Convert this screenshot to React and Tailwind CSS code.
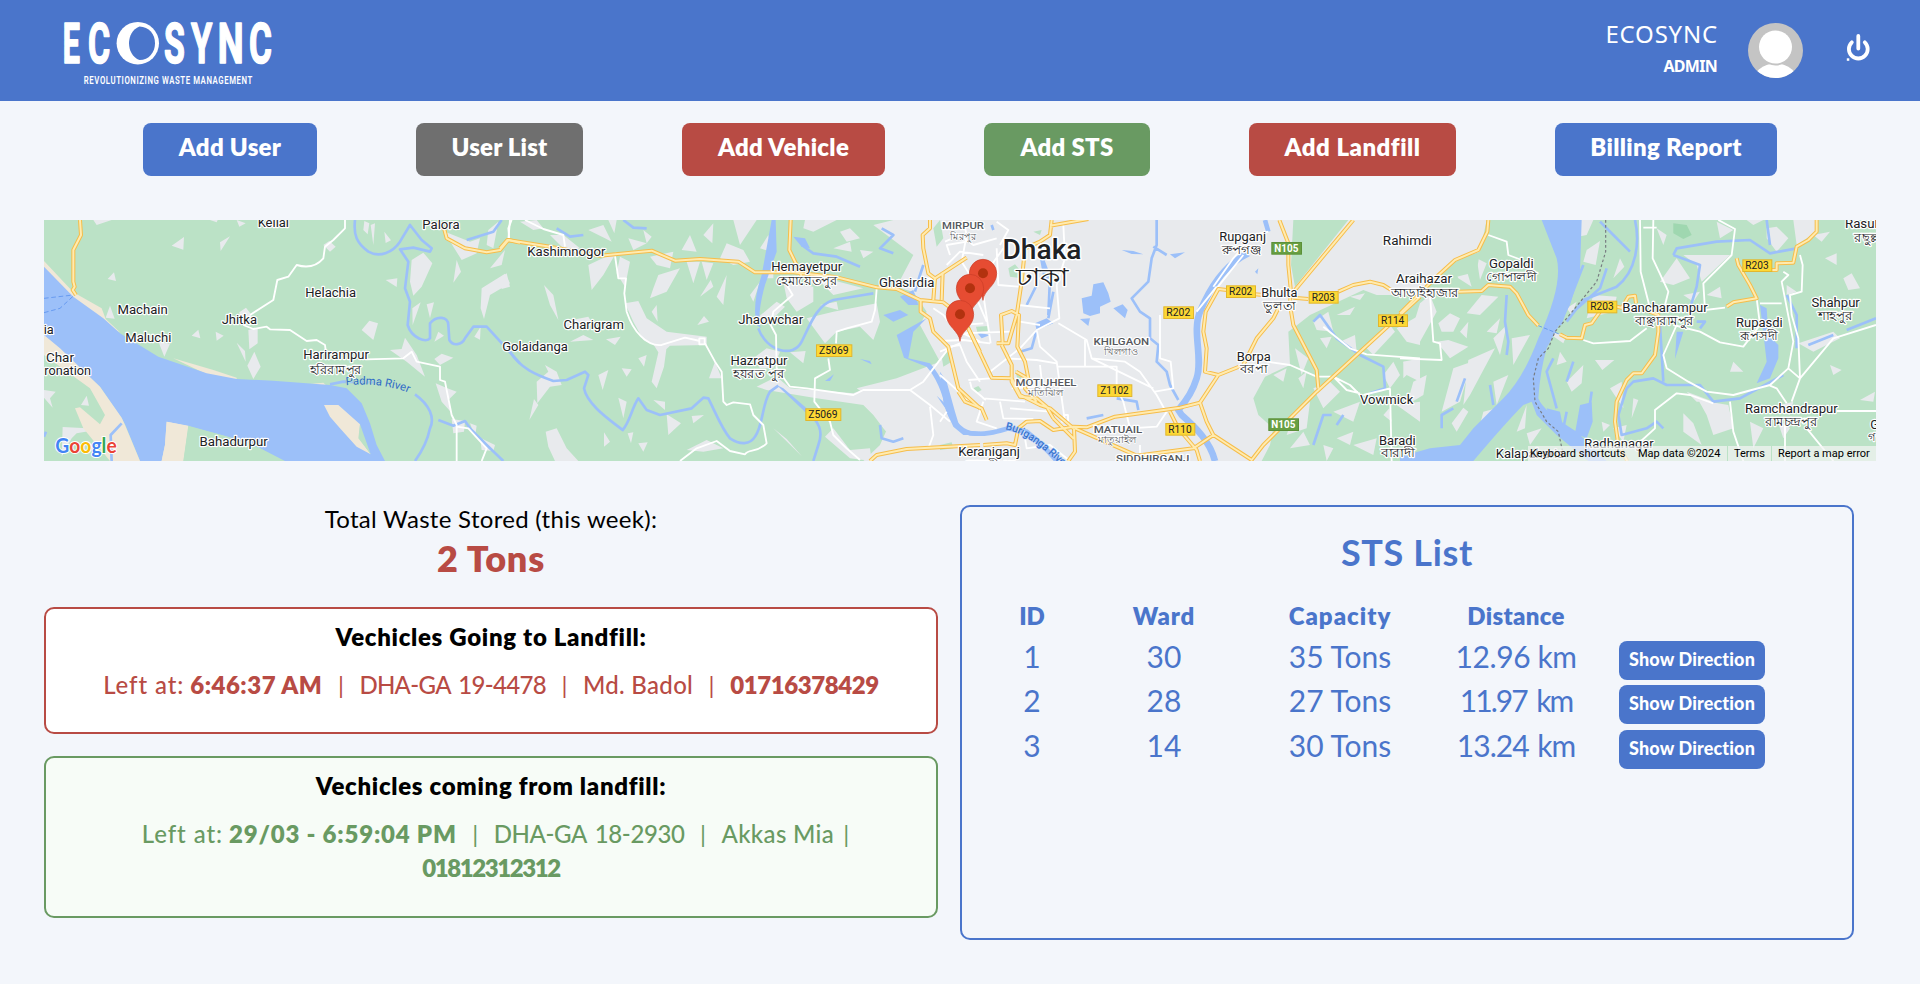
const actions = [
  { label: "Add User", box: "w-[174px] bg-[#4a75cb] tracking-[0.3px]" },
  { label: "User List", box: "w-[167px] bg-[#6f6f6f] tracking-[0.2px]" },
  { label: "Add Vehicle", box: "w-[203px] bg-[#b84b44] tracking-[0.3px]" },
  { label: "Add STS", box: "w-[166px] bg-[#699a62] tracking-[0.3px]" },
  { label: "Add Landfill", box: "w-[207px] bg-[#b84b44] tracking-[0.5px]" },
  { label: "Billing Report", box: "w-[222px] bg-[#4a75cb] tracking-[0.3px]" },
];

const stations = [
  { id: "1", ward: "30", capacity: "35 Tons", distance: "12.96 km", track: "tracking-[-0.4px]" },
  { id: "2", ward: "28", capacity: "27 Tons", distance: "11.97 km", track: "tracking-[-2px] [word-spacing:4px]" },
  { id: "3", ward: "14", capacity: "30 Tons", distance: "13.24 km", track: "tracking-[-1px] [word-spacing:2px]" },
];

const roboto = 'Roboto, "Noto Sans", sans-serif';

/* Geometry is kept per map tile; every tile is drawn at three units per pixel. */
const tiles = {
  a: "translate(-4 -5) scale(0.33333)",
  b: "translate(456 -5) scale(0.33333)",
  c: "translate(896 -5) scale(0.33333)",
  d: "translate(1356 -5) scale(0.33333)",
};

const urban = {
  a: "M395,92L432,66 430,104zM540,82L570,64 542,108zM510,15L533,15 530,22zM590,15L617,25 598,35zM203,192L222,172 228,198zM197,308L210,272 224,311zM455,362L475,344 481,370zM527,350L551,362 530,377zM356,382L390,386 373,425zM625,345L653,338 653,385 628,403zM590,383L615,408 617,440zM622,452L643,410 662,455 640,492zM598,292L618,278 635,300 615,330 600,320zM965,345L988,317 1014,325 1000,375zM1037,195L1072,190 1070,216zM850,90L868,78 887,95 870,110zM973,18L988,25 983,58 970,45zM992,30L1005,25 1000,90zM1033,50L1053,76 1037,84zM1115,135L1150,113 1177,145 1145,215 1120,242 1110,200zM1117,280L1142,262 1118,330zM1160,268L1182,262 1170,310zM1050,405L1085,402 1095,368 1130,420 1155,485 1100,440zM1183,432L1205,416 1240,428 1200,450zM1183,380L1195,350 1212,362zM1303,365L1322,335 1320,374zM1325,220L1395,176 1410,205 1350,240 1332,312 1322,280zM1250,135L1263,170 1240,203zM1215,50L1290,80 1320,70 1310,115 1265,135 1240,95zM1345,45L1375,20 1360,100 1340,90zM1350,160L1395,105 1385,150zM1187,505L1222,520 1250,530 1225,555 1232,590 1205,560zM1235,612L1275,618 1272,650 1240,655zM1320,668L1365,690 1360,708 1325,705zM123,570L140,542 147,572zM12,525L47,530 30,550 38,578 12,548zM68,636L185,642 110,655 95,670 65,725zM500,738L535,722 565,738zM160,15L215,15 170,30zM1290,625L1310,632 1305,665z",
  b: "M60,20L110,15 130,40 100,45zM0,190L20,175 30,215 5,222zM132,210L160,240 175,315 150,270zM150,60L190,60 240,100 200,110zM265,45L310,30 335,80 315,70zM325,15L350,15 343,55zM385,70L440,85 400,105zM430,45L455,65 440,85zM360,125L390,140 375,215 350,175zM265,150L350,110 310,180 275,225zM450,125L520,110 510,160 470,150zM545,105L570,60 590,110zM560,140L600,140 580,205zM605,140L640,145 620,195zM610,60L640,25 637,85zM660,130L680,85 730,105 750,140 700,150zM700,15L770,15 720,90zM780,100L805,60 815,110zM460,220L475,180 540,160 500,230 450,250zM600,245L632,195 640,215zM650,245L680,180 670,270zM455,290L470,270 473,320zM375,265L415,258 440,310 500,350 620,365 620,390 510,392 480,420 460,388 430,375 400,320zM190,320L265,305 280,330 200,345zM210,380L250,360 280,375zM318,373L362,365 345,390zM592,330L612,303 627,320zM478,400L500,395 492,455 470,520 455,500zM415,430L440,420 432,455zM295,480L325,465 308,525zM365,460L395,463 380,485zM110,500L145,470 135,450 170,470 185,510 150,515 112,565zM88,615L102,552 115,570zM137,650L170,640 200,700 235,738 165,738 145,695zM312,652L330,680 312,695zM383,655L400,652 393,685zM355,548L380,560 370,610zM460,555L495,560 495,585zM500,598L543,625 505,660zM575,603L612,600 580,625zM415,685L443,682 430,710zM560,705L620,675 670,700 610,710zM627,490L645,440 665,490zM760,430L800,400 840,410 820,460 780,460zM870,412L917,408 910,445zM770,515L830,485 870,520 1060,535 1100,520 1180,510 1290,570 1290,700 1200,700 1150,640 1120,600 1090,570 950,550 800,525zM820,640L860,672 907,725zM975,665L1000,640 1050,705 1110,700 1115,738 1050,730zM915,15L1010,15 940,50 910,40zM1000,100L1050,80 1055,110zM1020,50L1050,40 1080,70 1040,80zM1120,30L1180,15 1290,15 1290,170 1250,235 1190,215 1240,120zM1080,105L1120,110 1090,130zM850,200L940,215 940,260 890,290 860,250zM940,180L1090,220 1000,240zM770,310L830,260 855,275 830,300 790,320zM960,270L1010,260 1015,285zM920,310L1000,290 1130,265 1140,320 1120,375 1080,335 1010,350 975,385zM800,130L820,110 820,190 790,190zM750,240L780,200 760,260z",
  d: "M155,65L205,70 190,95zM160,160L195,150 215,215 175,190zM230,130L260,145 240,195zM245,240L295,245 240,300 200,295zM60,265L90,240 110,290 60,380 40,330zM115,325L150,295 180,310 160,350 125,350zM110,380L145,375 205,395 150,430zM180,350L205,320 200,370zM260,350L300,310 290,355zM205,435L285,400 210,540 190,570zM335,370L390,360 340,450zM280,370L320,330 300,420zM280,500L325,480 290,570zM160,460L215,440 180,560 125,590zM155,625L190,578 205,590 170,650zM250,590L290,580 240,630zM40,500L80,480 70,540 20,570zM10,440L60,440 10,490zM380,570L375,640 350,650zM380,655L425,640 390,690zM560,105L600,78 587,150 550,140zM500,15L580,15 560,60 510,70zM640,190L660,130 673,155zM585,435L643,435 607,465zM500,500L550,450 545,505 515,530zM480,410L500,440 470,450zM500,280L530,260 515,300zM630,520L665,500 670,580 650,550zM605,620L630,630 610,650zM700,550L715,555 695,610zM850,595L880,625 905,690 850,650zM920,240L960,215 965,250zM1275,130L1310,115 1310,150zM1330,190L1355,175 1380,220 1345,225zM1290,450L1325,465 1300,480zM1380,555L1425,530 1420,560zM1100,40L1130,35 1165,70 1130,110 1100,70zM1180,15L1250,15 1250,50 1190,90zM1240,60L1290,50 1265,80zM1040,15L1090,15 1060,30zM850,120L990,120 905,200 890,150zM950,20L1000,45 960,70zM780,200L830,130 870,190 820,210zM850,240L900,230 880,260zM895,555L985,570 1000,640 940,660 920,600zM1050,620L1090,640 1060,700zM1130,610L1170,640 1150,670zM860,530L940,560 890,560zM1195,385L1300,350 1320,370 1240,410zM1000,440L1030,470 990,470zM580,240L650,245 640,290 560,310zM440,350L500,360 490,385zM1100,580L1180,560 1170,600zM770,40L800,60 790,90zM640,640L680,630 670,680zM1160,210L1190,230 1160,240z",
};

const greens = {
  c: "M1060,15L1225,15 1065,215 1053,150zM205,160L225,148 240,165 235,188 210,185zM108,335L146,333 146,348 112,350zM5,425L25,398 35,440 10,455zM100,520L115,513 125,525 110,533zM225,465L250,480 235,500zM280,50L305,45 300,60zM0,690L35,682 40,700 0,705zM120,700L150,705 120,715zM-20,40L0,15 10,70 -10,95z",
  gaps: "M1120,320L1165,290 1180,350 1130,345zM1140,370L1175,365 1160,400zM1190,300L1245,275 1230,300zM1065,400L1105,430 1085,480zM1200,380L1245,360 1250,410zM1280,400L1350,330 1365,350 1300,420zM1330,480L1360,440 1380,480 1350,520zM1120,520L1170,500 1200,530 1150,580zM1180,590L1260,560 1240,620zM1060,600L1110,560 1100,640 1040,660zM1000,480L1040,460 1030,500zM1075,490L1100,470 1090,520zM1330,600L1348,580 1355,620zM1190,670L1240,650 1230,690zM1050,700L1090,650 1110,690zM1370,340L1440,300 1440,390 1400,380zM1390,440L1440,430 1440,500 1400,480zM1150,690L1180,700 1160,738zM1240,690L1310,670 1300,720zM1370,570L1440,560 1440,620zM1230,245L1275,235 1260,255z",
  d: "M265,15L425,15 440,110 360,150 330,100 240,110zM160,150L240,110 230,170 110,200zM820,25L860,30 875,60 850,70 820,55z",
};

const highways = {
  a: "M120,15L123,60 100,105 100,200 104,215 98,225 108,240M1190,25L1212,40 1220,70 1275,100 1340,112 1380,105 1405,75 1440,83",
  b: "M0,100L22,75 150,95 300,122 455,107 525,137 600,132 715,140 765,172 880,172 1010,187 1130,217 1190,222 1260,255 1330,262 1380,300 1405,340 1440,410M872,15L868,105 890,150 905,185M1290,15L1290,40 1268,60 1270,100 1285,175 1305,190 1300,255M1305,190L1400,128M1328,172L1325,255M1262,255L1262,290 1290,310 1300,350 1345,395 1375,520 1440,580M1110,738L1130,720 1220,702 1440,690",
  c: "M335,15L330,60 300,80 255,100 245,200 230,300 205,385 170,385M205,385L188,385 183,300 215,288 237,300 232,395 255,440 265,490M330,32L445,12M85,340L155,488 215,490 240,540 300,570 330,580 400,640M185,390L215,450 215,500 240,545 290,550 320,575 340,610M228,470L262,490 255,520 290,560M55,530L75,560 125,580 140,615M130,690L200,685 225,690 235,640 260,620 300,618 340,645 400,635 440,637 525,605 720,578 780,563 835,480 910,450 950,370 1000,310 1020,270M340,610L400,670M402,640L405,710 385,738M405,640L590,722 760,700 820,660 935,735 970,690 1130,530 1440,245M1240,15L1065,225M1018,15L1045,85 1045,150 1052,220 1050,270 1060,330 1130,465 1135,520M835,480L795,470 800,400 790,350 797,290 835,222 860,225M945,238L970,240M1060,248L1105,252M1195,230L1240,210 1290,200 1330,210 1370,235M690,590L715,640 770,705 780,738M780,563L800,620 820,660",
  d: "M265,15L262,50 235,105 165,135 110,185 0,295M175,230L245,228 265,210 330,215 350,235 385,300 415,332M480,358L500,368 545,370 555,330 575,325 600,290M650,275L665,278 685,245 705,242 708,265M735,285L775,300 775,350 765,420 725,475 700,475 680,495 650,560 645,620 655,690 682,738M980,275L1000,262 1070,250 1050,210 1015,150 1010,130M1115,165L1130,165 1130,145 1180,143 1190,95 1225,75 1250,50 1250,15",
};

const streets = {
  a: "M915,15L915,40 880,75 855,95 850,130Q820,165 770,150L745,185 712,195 700,255 630,300M610,330L640,342 680,335 690,343 750,345 800,378 830,375 855,390 860,430M980,433L1090,430 1115,410 1130,440 1200,455 1200,495 1215,500 1235,600 1250,630 1250,738M1250,635L1285,640 1340,700 1325,738M1415,15L1405,40 1408,75",
  b: "M75,15L130,42 190,60 195,95M30,15L25,75M345,122L355,190 378,190 373,235 380,290C400,350 440,395 485,390L555,368 600,378M598,370h16v18h-16zM615,385L645,440 665,470 670,560 680,570 700,562 750,568 760,600 790,630 800,685C770,715 745,700 735,718L690,708 650,678 590,700 540,738M860,210L878,240 820,290 812,330 828,360 830,460 870,515 920,520 1060,540 1090,525 1230,525 1270,500 1350,395M1130,222L1125,285 1115,320 1040,340 1010,350 1008,385M985,430L990,465 945,490 943,560 990,620 1000,660 1040,700 1080,735M1230,525L1290,570 1350,620M1290,575L1300,660 1285,700M1350,395L1380,390 1400,440 1440,500M1300,280L1330,300 1360,340 1440,380M1350,120L1340,90 1400,80M1260,190L1300,190",
  c: "M0,378L70,375 150,385M65,355L210,350M70,15L80,60 65,140 90,180M130,240L152,385M110,250L140,320M60,330L130,325M20,150L60,110 130,120M15,80L60,60 100,90 170,70M170,20L205,45 180,90M170,100L175,210 235,215M140,170L190,100M350,210L358,310 290,345 240,400 150,470M370,30L375,130 350,210M355,325L440,375 455,430 640,520M290,345L300,395 350,440 372,600 375,620M435,375L435,455M350,455L435,455 530,455 530,520 550,560 570,640 650,635 680,590M455,430L555,440 600,470 650,540 675,585M235,270L330,280M240,320L300,330M90,500L95,520Q150,565 130,550L255,560M85,495L150,490M180,560L190,610 280,612M200,430L290,435 350,445M215,520L290,515M210,580L330,590M300,450L310,540M130,560L110,620 170,640M250,640L260,700 330,690 390,738M660,300L660,430 692,440 700,520 645,530M830,215L770,290M985,50L940,60 880,130 820,215M830,220L910,120M980,440L1050,450 1130,485 1180,485 1230,510 1260,540M1150,335L1230,400 1280,418 1440,430M1180,485L1220,525 1260,535M1350,520L1355,738M1270,540L1350,520M370,600h14v20h-20M600,690L600,730M0,410L60,385M0,480L90,560M20,590L0,620",
  d: "M720,15L722,170 750,280M760,15L758,130 805,230 795,270M730,38L770,38M550,375L580,385 690,378 740,340M955,15L1005,42 995,120 910,205 915,285 975,278M830,330L790,420 800,460 865,500 920,530 1000,540 1110,510 1165,460 1180,380 1145,200 1165,180 1150,170M820,330L900,350 960,382 1030,395 1080,330 1070,250M1145,265L1080,265M1200,120L1208,150 1205,230 1170,240 1175,300 1195,370 1200,490 1175,560M1110,512L1130,520 1160,565M1165,460L1200,490 1300,370 1428,330M940,565L870,540 830,535 765,585 765,640 710,690M990,560L1000,650 1030,738M1310,588L1428,588M1155,630L1155,738M1220,640L1300,738M265,60L320,80 325,120 365,135M90,240L100,380 120,385 125,435 0,430",
};

const waterAreas = {
  a: "M12,155L100,245 190,310 240,355 355,425 500,475 590,492 700,497 870,510 920,520 965,565 990,625 1010,690 1035,738 730,738 660,700 580,670 440,632 380,620 375,690 365,738 300,738 255,628 245,610 180,515 130,470 12,370z",
  b: "M815,15L827,15 830,110 795,210Q770,300 782,340L770,330Q755,270 785,180zM1190,360L1280,310 1240,350 1225,430 1290,445Q1340,500 1362,610L1385,645 1440,650 1440,660 1390,660 1360,635 1340,590Q1320,500 1280,455L1212,428zM1150,300L1200,285 1225,300 1180,320zM1200,245L1240,225 1255,270 1225,270zM830,510L850,520 920,580 915,590zM1080,432L1110,438 1115,448zM975,498L1002,478 990,498zM1310,542L1340,570 1350,600zM880,65L915,70 930,100 905,95z",
  c: "M425,250L455,242 460,208 490,202 505,235 512,260 480,275 480,295 450,303 430,295zM520,280L548,268 563,285 555,310zM420,312L450,310 445,333zM285,325L320,310 340,325 290,345zM298,120L320,160 328,200 312,200zM545,105L580,108 610,118 575,117zM690,118L735,112 705,130zM945,170L955,160 952,178zM110,352L150,360 125,370zM0,470L20,500 45,590 60,640 40,625 10,560z",
  d: "M425,15L545,15 540,170 510,270 440,400Q420,470 415,550 430,590 530,650L620,738 565,738 470,660 410,600 395,560 370,570Q320,620 220,738L0,738 0,725 90,700 180,690 220,640 310,550Q370,490 415,370 490,210 470,130zM1080,270L1100,280 1105,360 1135,390 1135,430 1110,490 1070,505 1100,440zM540,570L575,562 578,620 560,670 525,655zM830,350L850,350 825,432zM440,580L480,590 490,640 450,610z",
};

const streams = {
  a: "M945,15C940,60 950,85 985,110C1020,130 1060,110 1080,80L1110,30 1145,75 1175,100 1170,110 1120,98 1080,103 1105,140 1095,220 1110,260 1103,330C1115,370 1160,385 1170,370L1170,325C1190,300 1225,305 1225,330L1228,375C1240,395 1265,390 1275,370L1300,335 1340,335 1440,445M870,508L910,500 1020,502M1125,538C1170,570 1185,610 1170,640Q1160,690 1125,738M1195,615L1240,632 1275,618 1290,640 1340,690 1390,738M245,625L212,660 215,738M1385,15L1360,50 1280,75M12,665L18,650",
  b: "M30,410C60,460 110,480 160,498L200,495 255,470 265,480 252,520C262,570 330,615 368,645C390,620 395,580 415,550L440,585 480,600 575,580 610,548 625,550C650,600 665,640 690,670C720,690 750,690 765,665C790,630 785,570 810,530L835,512M915,585C960,620 970,650 955,690L940,738M775,340C800,410 880,430 905,380C930,330 950,270 1000,255L1090,240 1120,235M170,40L210,65 250,60M370,15L400,38 440,40M905,90L940,115 1010,125 1080,155M1140,630L1145,670 1180,680 1210,670M1245,230L1260,180 1270,150M1145,40L1180,60 1140,100 1180,115",
  c: "M650,15L650,90 635,130 625,200 575,250 600,290 630,310 630,370 655,390 650,440 680,470 690,510 715,555M640,95L680,120M530,550L590,560 595,585M300,110L330,190 325,300M340,230L325,310M290,210L260,270M290,345L275,400 240,410M440,610L490,600M155,30L160,45M1120,320L1140,300 1190,370 1260,420 1330,455 1335,520 1290,535M1120,690L1150,600 1175,600M1190,630L1210,600",
  d: "M705,15C720,80 710,170 650,215L550,255 500,320M550,150L480,330M620,160L600,220 520,290M600,20L640,60 690,110M820,120L830,100 950,80 1050,75 1110,115 1190,100M820,120L900,150 890,215 870,280M780,330L790,500M680,520L700,500 760,490 800,510 900,510 940,560 1020,550 1150,480M680,520L655,600 665,660 740,640 770,620 790,640M1225,390L1300,360M1340,345L1428,310M320,240L315,320 325,380 320,420M460,430L440,470 470,580M520,440L500,500M575,530L565,600M500,590L490,640M125,640L125,600 160,580M195,490L170,560M270,510L280,570M1100,15L1110,90M890,320L915,320 900,340M1160,240L1190,300 1190,400",
};

const labels = [
  ["a", 700, 34, 94, "Kellai"], ["a", 1203, 40, 112, "Palora"], ["a", 872, 244, 152, "Helachia"],
  ["a", 308, 297, 151, "Machain"], ["a", 598, 325, 106, "Jhitka"], ["a", 325, 381, 138, "Maluchi"],
  ["a", 888, 432, 197, "Harirampur"], ["a", 26, 355, 30, "ia"], ["a", 60, 439, 84, "Char"],
  ["a", 83, 479, 140, "ronation"], ["a", 581, 693, 205, "Bahadurpur"],
  ["b", 199, 122, 234, "Kashimnogor"], ["b", 281, 342, 181, "Charigram"], ["b", 105, 406, 197, "Golaidanga"],
  ["b", 920, 168, 213, "Hemayetpur"], ["b", 1220, 216, 166, "Ghasirdia"], ["b", 812, 327, 195, "Jhaowchar"],
  ["b", 777, 450, 171, "Hazratpur"],
  ["c", 908, 78, 140, "Rupganj"], ["c", 1018, 246, 108, "Bhulta"], ["c", 941, 438, 102, "Borpa"],
  ["c", 1340, 566, 160, "Vowmick"], ["c", 1372, 688, 110, "Baradi"], ["c", 147, 722, 185, "Keraniganj"],
  ["d", 22, 89, 147, "Rahimdi"], ["d", 334, 158, 134, "Gopaldi"], ["d", 72, 204, 168, "Araihazar"],
  ["d", 795, 290, 256, "Bancharampur"], ["d", 1078, 335, 140, "Rupasdi"], ["d", 1307, 275, 145, "Shahpur"],
  ["d", 1174, 593, 278, "Ramchandrapur"], ["d", 657, 698, 208, "Radhanagar"], ["d", 390, 727, 205, "Kalapaharia"],
  ["d", 1433, 39, 196, "Rasullabad"], ["d", 1460, 641, 98, "Gopal"],
];

const localLabels = [
  ["a", 888, 474, 156, "হরিরামপুর"], ["b", 920, 207, 186, "হেমায়েতপুর"], ["b", 776, 487, 154, "হযরত পুর"],
  ["c", 906, 114, 118, "রুপগঞ্জ"], ["c", 1018, 284, 96, "ভুলতা"], ["c", 940, 472, 82, "বরপা"],
  ["c", 1372, 724, 100, "বারাদী"], ["c", 150, 760, 160, "কেরানীগঞ্জ"],
  ["d", 334, 195, 152, "গোপালদী"], ["d", 74, 243, 205, "আড়াইহাজার"], ["d", 793, 329, 178, "বাঞ্ছারামপুর"],
  ["d", 1077, 373, 112, "রূপসদী"], ["d", 1306, 312, 104, "শাহপুর"], ["d", 1174, 630, 158, "রামচন্দ্রপুর"],
  ["d", 1432, 78, 138, "রছুল্লাবাদ"], ["d", 1445, 677, 80, "গপাল"],
];

const districts = [
  ["c", 69, 43, 126, "MIRPUR", 70, 75, 78, "মিরপুর"],
  ["c", 544, 389, 167, "KHILGAON", 543, 419, 100, "খিলগাও"],
  ["c", 318, 514, 183, "MOTIJHEEL", 316, 544, 104, "মতিঝিল"],
  ["c", 534, 654, 146, "MATUAIL", 531, 685, 112, "মাতুয়াইল"],
  ["c", 638, 740, 220, "SIDDHIRGANJ", 638, 772, 100, "সিদ্ধিরগঞ্জ"],
];

const shields = [
  ["b", 948, 388, 107, "Z5069"], ["b", 916, 580, 106, "Z5069"], ["c", 858, 211, 88, "R202"],
  ["c", 670, 274, 90, "R202"], ["c", 1106, 228, 88, "R203"], ["c", 1314, 298, 88, "R114"],
  ["c", 472, 508, 103, "Z1102"], ["c", 676, 624, 88, "R110"], ["d", 562, 257, 88, "R203"],
  ["d", 1027, 133, 88, "R203"], ["c", 994, 81, 90, "N105", true], ["c", 985, 610, 90, "N105", true],
];

function Layer({ shapes, tile, ...rest }) {
  return <path d={shapes[tile]} transform={tiles[tile]} {...rest} />;
}

function PlaceText({ tile, x, y, width, size, fill = "#202124", weight = 400, halo = 7, children }) {
  return (
    <text
      transform={tiles[tile]}
      x={x}
      y={y}
      textAnchor="middle"
      textLength={width}
      lengthAdjust="spacingAndGlyphs"
      fontFamily={roboto}
      fontSize={size}
      fontWeight={weight}
      fill={fill}
      stroke="#fff"
      strokeWidth={halo}
      strokeLinejoin="round"
      paintOrder="stroke"
    >
      {children}
    </text>
  );
}

function Pin({ x, y }) {
  return (
    <g transform={`translate(${x} ${y})`}>
      <path d="M0,81C-3,48 -41,38 -41,0A41,42 0 1 1 41,0C41,38 3,48 0,81z" fill="#e64c32" stroke="#c93c27" strokeWidth="2" />
      <circle r="15" fill="#b2320f" />
    </g>
  );
}

function MapView() {
  const all = ["a", "b", "c", "d"];
  return (
    <div className="relative h-[241px] w-full overflow-hidden bg-[#bbe2c6]">
      <svg className="block" width="1832" height="241" viewBox="0 0 1832 241">
        <defs>
          <path id="padma" d="M918,511Q1010,501 1098,530L1160,556" />
          <path id="buriganga" d="M196,643C255,655 300,690 420,800" />
        </defs>
        <path
          transform={tiles.c}
          fill="#e8eaed"
          d="M-30,15L1640,15 1620,110 1550,135 1480,200 1440,240 1310,240 1270,225 1110,300 1065,335 1045,350 1050,450 975,485 940,550 955,600 1000,640 990,690 965,738 -230,738 -180,690 -140,600 -250,520 -130,490 0,440 -60,330 -40,290 -80,230 -60,180 -50,80z"
        />
        <Layer shapes={urban} tile="a" fill="#e8eaed" />
        <Layer shapes={urban} tile="b" fill="#e8eaed" />
        <Layer shapes={urban} tile="d" fill="#e8eaed" />
        <Layer shapes={greens} tile="c" fill="#bbe2c6" />
        <Layer shapes={greens} tile="d" fill="#bbe2c6" />
        <path transform={tiles.d} d="M820,25L860,30 875,60 850,72 820,55z" fill="#9fd7b0" />
        <path transform={tiles.c} d={greens.gaps} fill="#e8eaed" />
        <path
          transform={tiles.a}
          fill="#f0e8d8"
          d="M12,138L100,232 185,280 197,312 240,352 190,330 12,175zM370,615L445,632 430,738 360,738zM400,430L520,465 590,488 590,495 500,478zM800,508L850,503 860,512z"
        />
        {all.map((t) => (
          <Layer key={t} shapes={waterAreas} tile={t} fill="#9cc0f9" />
        ))}
        <path
          transform={tiles.a}
          fill="#f0e8d8"
          d="M12,360L60,400 180,515 245,608 255,630 300,738 210,738 130,640 105,580 120,577 180,628 195,600 150,520 12,420zM852,570L895,570 960,628 958,670 992,718 950,695 900,640 870,605zM380,620L445,632 430,738 365,738 375,690z"
        />
        <path transform={tiles.a} fill="#bbe2c6" d="M445,632L580,670 660,700 735,738 430,738zM960,628L968,650 992,718 955,670z" />
        {all.map((t) => (
          <Layer key={t} shapes={streams} tile={t} fill="none" stroke="#9cc0f9" strokeWidth="8" strokeLinejoin="round" />
        ))}
        <path transform={tiles.c} fill="none" stroke="#9cc0f9" strokeWidth="20" strokeLinejoin="round" d="M925,115C850,150 805,230 780,290C755,350 790,430 770,490Q755,540 715,585L725,600C770,640 810,680 825,738" />
        <path transform={tiles.c} fill="none" stroke="#9cc0f9" strokeWidth="14" d="M20,570Q40,640 90,655C140,660 170,650 205,640L260,650Q310,690 350,738M975,15L985,50" />
        <path transform={tiles.a} fill="none" stroke="#5d93ee" strokeWidth="2.5" strokeDasharray="14 8" d="M12,250L100,240M12,293L60,280 100,243" />
        {all.map((t) => (
          <Layer key={t} shapes={streets} tile={t} fill="none" stroke="#fff" strokeWidth="5.5" strokeLinejoin="round" />
        ))}
        {all.map((t) => (
          <Layer key={t} shapes={highways} tile={t} fill="none" stroke="#f6bd4a" strokeWidth="12" strokeLinejoin="round" />
        ))}
        {all.map((t) => (
          <Layer key={t} shapes={highways} tile={t} fill="none" stroke="#ffebb0" strokeWidth="6" strokeLinejoin="round" />
        ))}
        <path transform={tiles.d} fill="none" stroke="#777b80" strokeWidth="3.5" strokeDasharray="8 7" d="M617,15L617,110 590,200 500,310 465,350 445,400 415,430 400,490 405,560 440,620 475,650 490,720" />
        <path transform={tiles.d} fill="none" stroke="#5d93ee" strokeWidth="2.5" strokeDasharray="12 6" d="M415,332L480,358" />

        <text transform={tiles.a} fontFamily={roboto} fontSize="34" fill="#2f6bc7" stroke="#bbe2c6" strokeWidth="4" paintOrder="stroke">
          <textPath href="#padma">Padma River</textPath>
        </text>
        <text transform={tiles.c} fontFamily={roboto} fontSize="31" fill="#2f6bc7" stroke="#9cc0f9" strokeWidth="3" paintOrder="stroke">
          <textPath href="#buriganga">Buriganga River</textPath>
        </text>

        {labels.map(([tile, x, y, w, name]) => (
          <PlaceText key={tile + name} tile={tile} x={x} y={y + 1} width={w} size={39}>{name}</PlaceText>
        ))}
        {localLabels.map(([tile, x, y, w, name]) => (
          <PlaceText key={tile + name} tile={tile} x={x} y={y + 2} width={w} size={36}>{name}</PlaceText>
        ))}
        {districts.map(([tile, x, y, w, name, lx, ly, lw, local]) => (
          <g key={name}>
            <PlaceText tile={tile} x={x} y={y} width={w} size={29} fill="#55585d" weight={500}>{name}</PlaceText>
            <PlaceText tile={tile} x={lx} y={ly} width={lw} size={29} fill="#55585d" halo={5}>{local}</PlaceText>
          </g>
        ))}
        <PlaceText tile="c" x={306} y={131} width={237} size={84} weight={500} halo={9}>Dhaka</PlaceText>
        <PlaceText tile="c" x={306} y={213} width={158} size={76} halo={8}>ঢাকা</PlaceText>

        {shields.map(([tile, x, y, w, name, national]) => (
          <g key={tile + x + name} transform={tiles[tile]}>
            <rect x={x + 1.5} y={y + 1.5} width={w - 1} height="35" fill={national ? "#689f43" : "#fdd835"} stroke={national ? "#5b9038" : "#e2b62c"} strokeWidth="3" />
            <text x={x + w / 2} y={y + 29} textAnchor="middle" textLength={w - 18} lengthAdjust="spacingAndGlyphs" fontFamily={roboto} fontSize="30" fontWeight={national ? 700 : 400} fill={national ? "#fff" : "#202124"}>
              {name}
            </text>
          </g>
        ))}

        <g transform={tiles.c}>
          <Pin x={129} y={175} />
          <Pin x={90} y={220} />
          <Pin x={60} y={298} />
        </g>

        <text transform={tiles.a} x="46" y="714" textLength="184" lengthAdjust="spacingAndGlyphs" fontFamily="Lato, sans-serif" fontWeight="700" fontSize="60" stroke="#fff" strokeWidth="6" strokeLinejoin="round" paintOrder="stroke">
          <tspan fill="#4285f4">G</tspan>
          <tspan fill="#ea4335">o</tspan>
          <tspan fill="#fbbc04">o</tspan>
          <tspan fill="#4285f4">g</tspan>
          <tspan fill="#34a853">l</tspan>
          <tspan fill="#ea4335">e</tspan>
        </text>
      </svg>
      <div className="absolute right-0 bottom-0 flex h-[15px] font-[Roboto,sans-serif] text-[11px] leading-[15px] whitespace-nowrap text-black">
        <span className="w-[105px] bg-[#f5f5f5]/70 pl-[2px]">Keyboard shortcuts</span>
        <span className="w-[94px] bg-[#f5f5f5]/70 pl-[5px]">Map data ©2024</span>
        <span className="ml-px w-[43px] bg-[#f5f5f5]/70 pl-[6px]">Terms</span>
        <span className="ml-px w-[104px] bg-[#f5f5f5]/70 pl-[6px]">Report a map error</span>
      </div>
    </div>
  );
}

function Logo() {
  const glyphs = [["E", 62.8, 0.55], ["C", 88, 0.61], ["S", 164, 0.61], ["Y", 191, 0.62], ["N", 217.8, 0.66], ["C", 249, 0.63]];
  return (
    <svg width="300" height="101" viewBox="0 0 300 101" fill="#fff">
      {glyphs.map(([ch, x, sx]) => (
        <text key={x} transform={`translate(${x} 63.2) scale(${sx} 1)`} fontFamily={roboto} fontWeight="700" fontSize="55.5" stroke="#fff" strokeWidth="1.6" strokeLinejoin="round">
          {ch}
        </text>
      ))}
      <circle cx="137.8" cy="43.2" r="21.2" />
      <path d="M139.500,26.500C149,27 155,34 155,43.200S149,60 139.500,60C132.500,57.500 129,50 129,43.200S132.500,29 139.500,26.500z" fill="#4a75cb" />
      <text transform="translate(83.800 83.800) scale(0.72 1)" textLength="234" fontFamily={roboto} fontWeight="600" fontSize="10.800">
        REVOLUTIONIZING WASTE MANAGEMENT
      </text>
    </svg>
  );
}

function Header() {
  return (
    <header className="flex h-[101px] justify-between bg-[#4a75cb] pr-[50px] text-white">
      <Logo />
      <div className="flex">
        <div className="flex flex-col items-end gap-1 pt-[18px] font-['Noto_Sans',sans-serif]">
          <span className="-mr-px text-[24px] leading-[32px] font-normal tracking-[0.8px]">ECOSYNC</span>
          <span className="text-[16px] leading-[24px] font-bold tracking-[-0.7px]">ADMIN</span>
        </div>
        <svg className="mt-[23px] ml-[31px]" width="55" height="55" viewBox="0 0 55 55">
          <clipPath id="avatar">
            <circle cx="27.5" cy="27.5" r="27.5" />
          </clipPath>
          <g clipPath="url(#avatar)">
            <rect width="55" height="55" fill="#c4c4c4" />
            <ellipse cx="27.5" cy="60" rx="23" ry="19.500" fill="#fff" />
            <circle cx="27.5" cy="24" r="18.500" fill="#c4c4c4" />
            <circle cx="27.5" cy="24" r="16.500" fill="#fff" />
          </g>
        </svg>
        <svg className="mt-[33px] ml-[42px]" width="25" height="29" viewBox="0 0 25 29" fill="none" stroke="#fff" strokeWidth="3.800" strokeLinecap="round">
          <path d="M6.800,9.300A9.400,9.400 0 1 0 19.800,9.300M13.300,3V15.500" />
          <rect x="1.800" y="25.300" width="2.500" height="2.500" fill="#fff" stroke="none" />
        </svg>
      </div>
    </header>
  );
}

const Bar = () => <span className="w-[37px] text-center">|</span>;

export default function App() {
  return (
    <div className="flex h-[984px] flex-col bg-[#f3f6fb] font-[Lato,'Noto_Sans',sans-serif] text-black">
      <Header />
      <nav className="flex justify-evenly px-[44px] pt-[22px]">
        {actions.map((a) => (
          <button key={a.label} className={`flex h-[53px] items-center justify-center rounded-lg pb-1.5 text-[24px] font-extrabold text-white ${a.box}`}>
            {a.label}
          </button>
        ))}
      </nav>
      <main className="px-[44px] pt-[44px]">
        <MapView />
        <div className="mt-[44px] flex gap-[22px]">
          <section className="w-[894px] text-center">
            <p className="text-[24px] leading-[28px] tracking-[0.3px]">Total Waste Stored (this week):</p>
            <p className="mt-[3px] text-[36px] leading-[44px] font-extrabold tracking-[0.8px] text-[#b84b44]">2 Tons</p>
            <div className="mt-[27px] h-[127px] rounded-[10px] border-2 border-[#b84b44] bg-white pt-[12px] text-[24px]">
              <h2 className="leading-[32px] font-extrabold tracking-[0.7px]">Vechicles Going to Landfill:</h2>
              <div className="mt-[14px] flex justify-center leading-[35px] whitespace-nowrap text-[#b84b44]">
                <span className="mr-[6px] font-medium tracking-[0.9px]">Left at:</span>
                <b className="font-extrabold tracking-[0.5px]">6:46:37 AM</b>
                <Bar />
                <span className="font-medium tracking-[-0.7px] [word-spacing:3px]">DHA-GA 19-4478</span>
                <Bar />
                <span className="font-medium tracking-[0.3px]">Md. Badol</span>
                <Bar />
                <b className="font-extrabold tracking-[-0.4px]">01716378429</b>
              </div>
            </div>
            <div className="mt-[22px] h-[162px] rounded-[10px] border-2 border-[#699a62] bg-[#f7fcf7] pt-[12px] text-[24px]">
              <h2 className="leading-[32px] font-extrabold tracking-[0.7px]">Vechicles coming from landfill:</h2>
              <div className="mt-[14px] flex justify-center pl-[9px] leading-[35px] whitespace-nowrap text-[#699a62]">
                <span className="mr-[6px] font-medium tracking-[0.9px]">Left at:</span>
                <b className="font-extrabold tracking-[0.8px]">29/03 - 6:59:04 PM</b>
                <Bar />
                <span className="font-medium tracking-[-0.4px] [word-spacing:3px]">DHA-GA 18-2930</span>
                <Bar />
                <span className="font-medium tracking-[0.35px]">Akkas Mia</span>
                <span className="w-[15px] text-right">|</span>
              </div>
              <b className="block leading-[34px] font-extrabold tracking-[-1.4px] text-[#699a62]">01812312312</b>
            </div>
          </section>

          <section className="h-[435px] w-[894px] rounded-[10px] border-2 border-[#4a75cb] pt-[23px] text-center text-[#4a75cb]">
            <h1 className="text-[36px] leading-[44px] font-bold tracking-[0.65px]">STS List</h1>
            <div className="mt-[26px] ml-[26px] grid grid-cols-[88px_176px_176px_176px_176px] text-[24px] leading-[32px] font-extrabold">
              <span>ID</span>
              <span className="tracking-[0.8px]">Ward</span>
              <span className="tracking-[1px]">Capacity</span>
              <span className="tracking-[0.3px]">Distance</span>
            </div>
            <div className="mt-px ml-[26px]">
              {stations.map((s) => (
                <div key={s.id} className="grid h-[44.3px] grid-cols-[88px_176px_176px_176px_176px] text-[30px] leading-[46px]">
                  <span>{s.id}</span>
                  <span>{s.ward}</span>
                  <span>{s.capacity}</span>
                  <span className={s.track}>{s.distance}</span>
                  <button className="mx-auto mt-[8px] flex h-[39px] w-[146px] items-center justify-center rounded-lg bg-[#4a75cb] pb-[3px] text-[18px] leading-[24px] font-black tracking-[0.15px] text-white">
                    Show Direction
                  </button>
                </div>
              ))}
            </div>
          </section>
        </div>
      </main>
    </div>
  );
}
